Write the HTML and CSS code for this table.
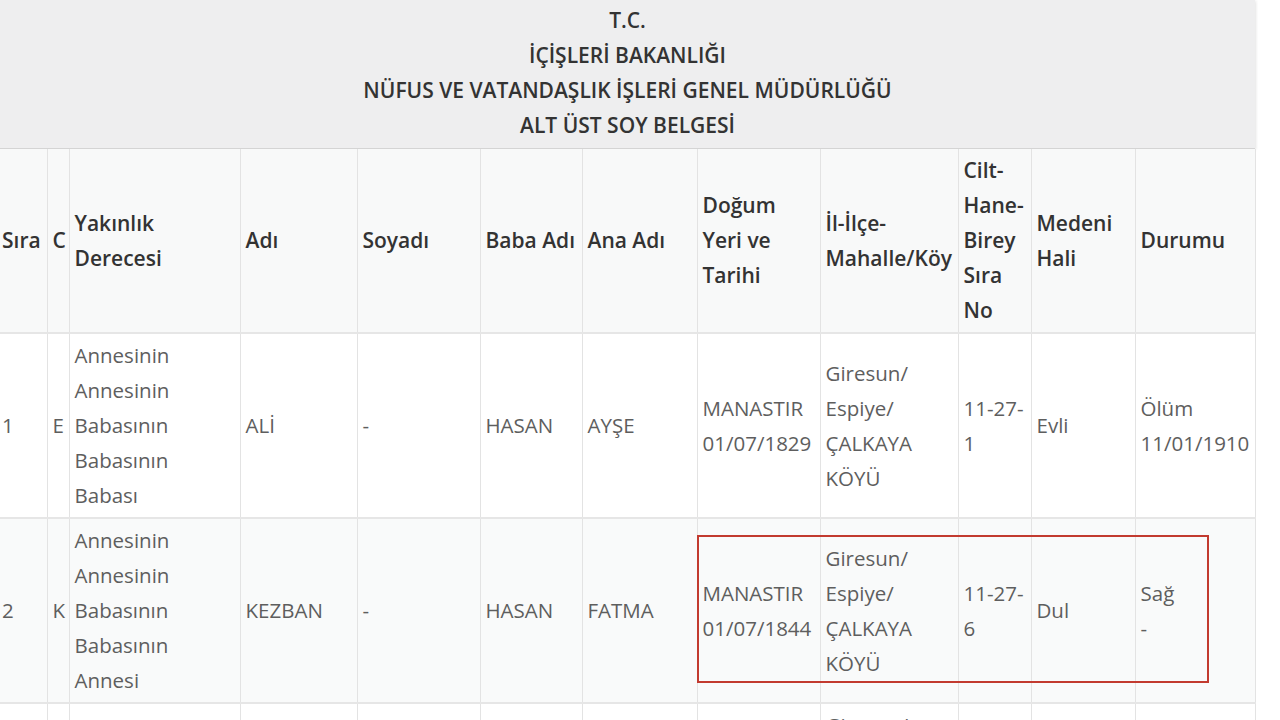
FILE: index.html
```html
<!DOCTYPE html>
<html lang="tr">
<head>
  <meta charset="UTF-8">
  <meta name="viewport" content="width=device-width, initial-scale=1.0">
  <title>Alt Üst Soy Belgesi</title>
  <link rel="stylesheet" href="styles.css">
</head>
<body>
  <div class="sheet">
    <div class="sheet-head">
      <p>T.C.</p>
      <p>İÇİŞLERİ BAKANLIĞI</p>
      <p>NÜFUS VE VATANDAŞLIK İŞLERİ GENEL MÜDÜRLÜĞÜ</p>
      <p>ALT ÜST SOY BELGESİ</p>
    </div>
    <table class="soy">
      <colgroup>
        <col style="width: 47px">
        <col style="width: 22px">
        <col style="width: 171px">
        <col style="width: 117px">
        <col style="width: 123px">
        <col style="width: 102px">
        <col style="width: 115px">
        <col style="width: 123px">
        <col style="width: 138px">
        <col style="width: 73px">
        <col style="width: 104px">
        <col style="width: 120px">
      </colgroup>
      <thead>
        <tr>
          <th class="first">Sıra</th>
          <th>C</th>
          <th>Yakınlık Derecesi</th>
          <th>Adı</th>
          <th>Soyadı</th>
          <th class="nowrap">Baba Adı</th>
          <th>Ana Adı</th>
          <th>Doğum Yeri ve Tarihi</th>
          <th>İl-İlçe-<br>Mahalle/Köy</th>
          <th>Cilt-<br>Hane-<br>Birey Sıra No</th>
          <th>Medeni Hali</th>
          <th>Durumu</th>
        </tr>
      </thead>
      <tbody>
        <tr>
          <td class="first">1</td>
          <td>E</td>
          <td>Annesinin Annesinin Babasının Babasının Babası</td>
          <td>ALİ</td>
          <td>-</td>
          <td>HASAN</td>
          <td>AYŞE</td>
          <td>MANASTIR 01/07/1829</td>
          <td>Giresun/<br>Espiye/<br>ÇALKAYA KÖYÜ</td>
          <td>11-27-<br>1</td>
          <td>Evli</td>
          <td>Ölüm 11/01/1910</td>
        </tr>
        <tr>
          <td class="first">2</td>
          <td>K</td>
          <td>Annesinin Annesinin Babasının Babasının Annesi</td>
          <td>KEZBAN</td>
          <td>-</td>
          <td>HASAN</td>
          <td>FATMA</td>
          <td>MANASTIR 01/07/1844</td>
          <td>Giresun/<br>Espiye/<br>ÇALKAYA KÖYÜ</td>
          <td>11-27-<br>6</td>
          <td>Dul</td>
          <td>Sağ<br>-</td>
        </tr>
        <tr>
          <td class="first">3</td>
          <td>E</td>
          <td>Annesinin Annesinin Babası</td>
          <td>MEHMET</td>
          <td>-</td>
          <td>ALİ</td>
          <td>KEZBAN</td>
          <td>ESPİYE 01/07/1866</td>
          <td>Giresun/<br>Espiye/<br>ÇALKAYA KÖYÜ</td>
          <td>11-27-<br>2</td>
          <td>Evli</td>
          <td>Ölüm 03/05/1931</td>
        </tr>
      </tbody>
    </table>
    <div class="mark"></div>
  </div>
</body>
</html>
```

FILE: styles.css
```css
* {margin: 0; padding: 0;}
body {
  background: #fff;
  font-family: "Open Sans", "Liberation Sans", sans-serif;
  font-size: 21px;
  line-height: 35px;
  color: #5e5e5e;
}
.sheet {
  position: relative;
  width: 1255px;
}
.sheet-head {
  background: #eeeeef;
  text-align: center;
  font-weight: 600;
  color: #333;
  padding: 3px 0 5px;
  border-bottom: 1px solid #d4d4d4;
  box-shadow: 0 2px 3px rgba(0, 0, 0, 0.1), 2px 0 2px rgba(0, 0, 0, 0.04);
}
.soy {
  width: 1255px;
  table-layout: fixed;
  border-collapse: collapse;
}
.soy th,
.soy td {
  padding: 4px 5px;
  text-align: left;
  vertical-align: middle;
  border-left: 1px solid #e3e3e3;
  border-right: 1px solid #e3e3e3;
}
.soy td {
  font-size: 20.5px;
}
.soy th {
  font-weight: 600;
  color: #333;
  background: #f8f9f9;
}
.soy .nowrap {
  white-space: nowrap;
}
.soy tbody tr {
  border-top: 2px solid #e6e6e6;
}
.soy tbody tr:nth-child(even) td {
  background: #f9fafa;
}
.soy .first {
  padding-left: 2px;
  border-left: none;
}
.mark {
  position: absolute;
  left: 697px;
  top: 535px;
  width: 508px;
  height: 144px;
  border: 2px solid #c23a2f;
}
```
